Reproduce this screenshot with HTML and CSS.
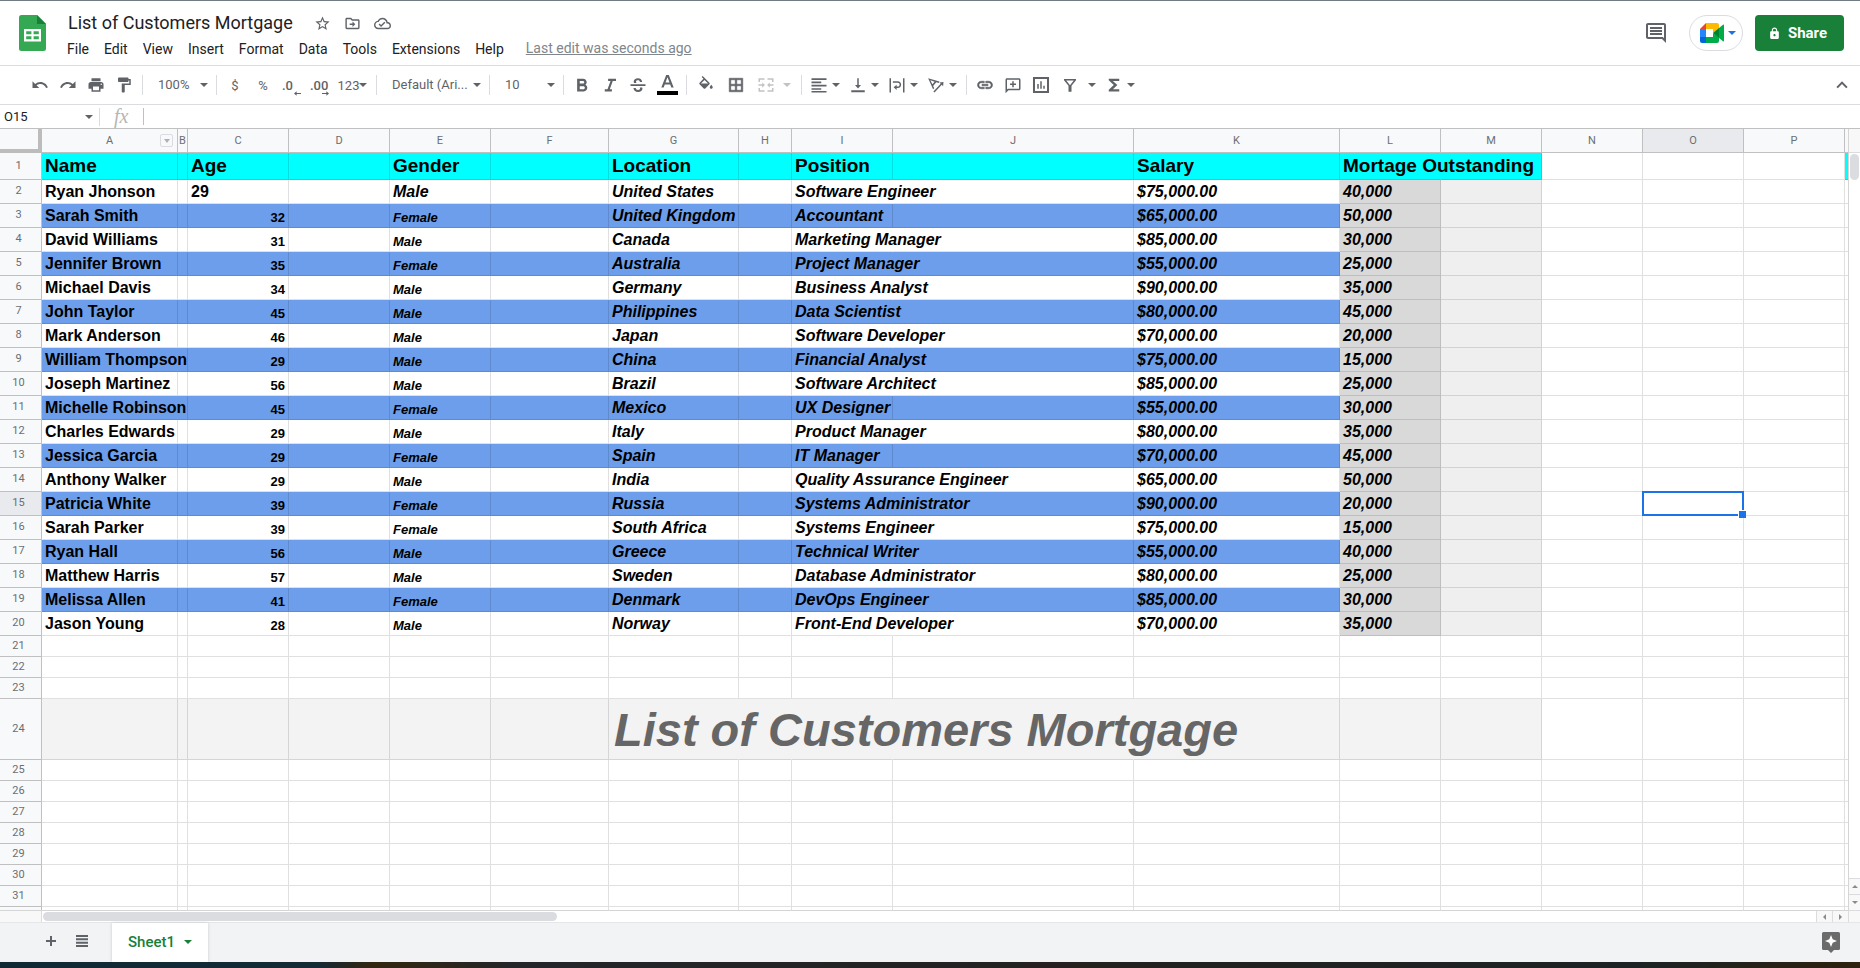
FILE: index.html
```html
<!DOCTYPE html>
<html lang="en">
<head>
<meta charset="utf-8">
<title>List of Customers Mortgage</title>
<link rel="stylesheet" href="styles.css">
</head>
<body>
<div class="app">
  <header class="header">
    <svg class="logo" viewBox="0 0 27 36" aria-hidden="true">
      <path d="M2.5 0H18l9 9v24.500a2.500 2.500 0 0 1-2.500 2.500h-22A2.500 2.500 0 0 1 0 33.500v-31A2.500 2.500 0 0 1 2.500 0z" fill="#34a853"/>
      <path d="M18 0l9 9h-9z" fill="#188038"/>
      <path d="M5 14h17v12.500H5zM7.200 16.200v3h5.200v-3zM14.600 16.200v3h5.200v-3zM7.200 21.300v3h5.200v-3zM14.600 21.300v3h5.200v-3z" fill="#fff" fill-rule="evenodd"/>
    </svg>
    <div class="doc">
      <div class="doc-row">
        <h1 class="doc-title">List of Customers Mortgage</h1>
        <button class="doc-btn" aria-label="Star"><svg viewBox="0 0 24 24"><path d="M22 9.240l-7.190-.620L12 2 9.190 8.630 2 9.240l5.460 4.730L5.820 21 12 17.270 18.180 21l-1.630-7.030L22 9.240zM12 15.400l-3.760 2.270 1-4.280-3.320-2.880 4.380-.380L12 6.100l1.710 4.040 4.380.380-3.320 2.880 1 4.280L12 15.400z"/></svg></button>
        <button class="doc-btn" aria-label="Move"><svg viewBox="0 0 24 24"><path d="M20 6h-8l-2-2H4c-1.100 0-2 .900-2 2v12c0 1.100.900 2 2 2h16c1.100 0 2-.900 2-2V8c0-1.100-.900-2-2-2zm0 12H4V6h5.200l2 2H20v10zm-8-1l4-4-4-4v3H8v2h4v3z"/></svg></button>
        <button class="doc-btn" aria-label="Saved to Drive"><svg viewBox="0 0 24 24"><path d="M19.350 10.040C18.670 6.590 15.640 4 12 4 9.110 4 6.600 5.640 5.350 8.040 2.340 8.360 0 10.910 0 14c0 3.310 2.690 6 6 6h13c2.760 0 5-2.240 5-5 0-2.640-2.050-4.780-4.650-4.960zM19 18H6c-2.210 0-4-1.790-4-4 0-2.050 1.530-3.760 3.560-3.970l1.070-.110.500-.950C8.080 7.140 9.940 6 12 6c2.620 0 4.880 1.860 5.390 4.430l.300 1.500 1.530.110c1.560.100 2.780 1.410 2.780 2.960 0 1.650-1.350 3-3 3zm-9-3.820l-2.090-2.090L6.500 13.500 10 17l6.010-6.010-1.410-1.410z"/></svg></button>
      </div>
      <nav class="menus">
        <button class="menu">File</button><button class="menu">Edit</button><button class="menu">View</button><button class="menu">Insert</button><button class="menu">Format</button><button class="menu">Data</button><button class="menu">Tools</button><button class="menu">Extensions</button><button class="menu">Help</button>
        <a class="last-edit" href="#history">Last edit was seconds ago</a>
      </nav>
    </div>
    <button class="comments" aria-label="Open comment history"><svg viewBox="0 0 24 24"><path d="M21.990 4c0-1.100-.890-2-1.990-2H4c-1.100 0-2 .900-2 2v12c0 1.100.900 2 2 2h14l4 4-.010-18zM20 4v13.170L18.830 16H4V4h16zM6 12h12v2H6zm0-3h12v2H6zm0-3h12v2H6z"/></svg></button>
    <button class="meet" aria-label="Join a call">
      <svg class="meet-logo" viewBox="0 0 24 20" aria-hidden="true">
        <path d="M6 0v6H0z" fill="#ea4335"/><path d="M0 6h6v8H0z" fill="#2684fc"/><path d="M0 14h6v6H2a2 2 0 0 1-2-2z" fill="#0066da"/>
        <path d="M6 0h11a2 2 0 0 1 2 2v4.500L13 10V6H6z" fill="#ffba00"/><path d="M6 14h7v-4l6 4.500V18a2 2 0 0 1-2 2H6z" fill="#00ac47"/>
        <path d="M13 10l6-5v10z" fill="#00832d"/><path d="M19 5l4-3.300c.500-.400 1 0 1 .500v15.600c0 .500-.500.900-1 .500L19 15z" fill="#00ac47"/>
      </svg>
      <span class="caret caret-blue"></span>
    </button>
    <button class="share"><svg viewBox="0 0 24 24"><path d="M18 8h-1V6c0-2.760-2.240-5-5-5S7 3.240 7 6v2H6c-1.100 0-2 .900-2 2v10c0 1.100.900 2 2 2h12c1.100 0 2-.900 2-2V10c0-1.100-.900-2-2-2zm-6 9c-1.100 0-2-.900-2-2s.900-2 2-2 2 .900 2 2-.900 2-2 2zM9 8V6c0-1.660 1.340-3 3-3s3 1.340 3 3v2z"/></svg>Share</button>
  </header>

  <div class="toolbar" role="toolbar" aria-label="Main">
    <button class="tool" aria-label="Undo"><svg viewBox="0 0 24 24"><path d="M12.500 8c-2.650 0-5.050.990-6.900 2.600L2 7v9h9l-3.620-3.620c1.390-1.160 3.160-1.880 5.120-1.880 3.540 0 6.550 2.310 7.600 5.500l2.370-.780C21.080 11.030 17.150 8 12.500 8z"/></svg></button>
    <button class="tool" aria-label="Redo"><svg viewBox="0 0 24 24"><path d="M18.400 10.600C16.550 8.990 14.150 8 11.500 8c-4.650 0-8.580 3.030-9.960 7.220L3.900 16c1.050-3.190 4.050-5.500 7.600-5.500 1.950 0 3.730.720 5.120 1.880L13 16h9V7l-3.600 3.600z"/></svg></button>
    <button class="tool" aria-label="Print"><svg viewBox="0 0 24 24"><path d="M19 8H5c-1.660 0-3 1.340-3 3v6h4v4h12v-4h4v-6c0-1.660-1.340-3-3-3zm-3 11H8v-5h8v5zm3-7c-.550 0-1-.450-1-1s.450-1 1-1 1 .450 1 1-.450 1-1 1zm-1-9H6v4h12V3z"/></svg></button>
    <button class="tool" aria-label="Paint format"><svg viewBox="0 0 24 24"><path d="M18 4V3c0-.550-.450-1-1-1H5c-.550 0-1 .450-1 1v4c0 .550.450 1 1 1h12c.550 0 1-.450 1-1V6h1v4H9v11c0 .550.450 1 1 1h2c.550 0 1-.450 1-1v-9h8V4h-3z"/></svg></button>
    <span class="sep"></span>
    <span class="picker"><select aria-label="Zoom"><option>100%</option></select></span>
    <span class="sep"></span>
    <button class="tool" aria-label="Currency">$</button>
    <button class="tool" aria-label="Percent">%</button>
    <button class="tool decimals" aria-label="Decrease decimal places">.0<svg viewBox="0 0 8 5"><path d="M3 0v2h5v1H3v2L0 2.500z"/></svg></button>
    <button class="tool decimals" aria-label="Increase decimal places">.00<svg viewBox="0 0 8 5"><path d="M5 0v2H0v1h5v2l3-2.500z"/></svg></button>
    <button class="tool formats" aria-label="More formats">123<span class="caret"></span></button>
    <span class="sep"></span>
    <span class="picker picker-font"><select aria-label="Font"><option>Default (Ari...</option></select></span>
    <span class="sep"></span>
    <span class="picker"><select aria-label="Font size"><option>10</option></select></span>
    <span class="sep"></span>
    <button class="tool" aria-label="Bold"><svg viewBox="0 0 24 24"><path d="M16.500 11.600c1-.800 1.800-2 1.800-3.200C18.300 5.600 16.200 3.500 13.500 3.500H5.500v17h8.900c2.700 0 4.700-2.100 4.700-4.700 0-1.900-1.100-3.500-2.600-4.200zM9 6.500h4.200c1 0 1.800.800 1.800 1.800s-.800 1.800-1.800 1.800H9zm4.800 11H9v-4h4.800c1.100 0 2 .900 2 2s-.900 2-2 2z"/></svg></button>
    <button class="tool" aria-label="Italic"><svg viewBox="0 0 24 24"><path d="M9.500 3.500v3h3.200L8.700 17.500H5v3h9.500v-3h-2.800l4-11H20v-3z"/></svg></button>
    <button class="tool" aria-label="Strikethrough"><svg viewBox="0 0 24 24"><path d="M2 11h20v2.200H2zM17.500 8h-3c0-1.500-1-2.400-2.600-2.400-1.500 0-2.500.700-2.500 1.900 0 .700.300 1.200.900 1.700H6.700c-.300-.500-.400-1.100-.400-1.800 0-2.600 2.300-4.400 5.600-4.400 3.400 0 5.600 2 5.600 5zM6 16h3c.100 1.700 1.200 2.600 3.100 2.600 1.700 0 2.700-.700 2.700-1.900 0-.600-.200-1-.600-1.400h3.400c.200.500.300 1 .300 1.600 0 2.700-2.200 4.300-5.700 4.300-3.900 0-6.200-2-6.200-5.200z"/></svg></button>
    <button class="tool tool-wide" aria-label="Text color"><svg class="text-color" viewBox="0 0 21 20"><path d="M9.200 0h2.600l4.900 12.500h-2.400l-1.100-3H7.800l-1.100 3H4.300zM8.500 7.500h4L10.500 2.200z"/><path d="M0 16h21v4H0z" fill="#000"/></svg></button>
    <span class="sep"></span>
    <button class="tool tool-wide" aria-label="Fill color"><svg viewBox="0 0 24 24"><path d="M16.560 8.940L7.620 0 6.210 1.410l2.380 2.380-5.150 5.150c-.590.590-.590 1.540 0 2.120l5.500 5.500c.290.290.680.440 1.060.440s.770-.150 1.060-.440l5.500-5.500c.590-.580.590-1.530 0-2.120zM5.210 10L10 5.210 14.790 10zM19 11.500s-2 2.170-2 3.500c0 1.100.900 2 2 2s2-.900 2-2c0-1.330-2-3.500-2-3.500z"/></svg></button>
    <button class="tool tool-wide" aria-label="Borders"><svg viewBox="0 0 24 24"><path d="M3 3v18h18V3zm8 16H5v-6h6zm0-8H5V5h6zm8 8h-6v-6h6zm0-8h-6V5h6z" stroke="currentColor" stroke-width=".8"/></svg></button>
    <button class="tool merge" aria-label="Merge cells" disabled><svg viewBox="0 0 24 24"><path d="M2 3h8v2H4v3H2zM14 3h8v5h-2V5h-6zM2 16h2v3h6v2H2zM20 16h2v5h-8v-2h6zM2 11h5V8.500l3.500 3.500L7 15.500V13H2zM22 11h-5V8.500L13.500 12l3.500 3.500V13h5z"/></svg><span class="caret"></span></button>
    <span class="sep"></span>
    <button class="tool pair" aria-label="Horizontal align"><svg viewBox="0 0 24 24"><path d="M2 3h20v2.200H2zM2 7.400h13v2.200H2zM2 11.800h20V14H2zM2 16.200h13v2.200H2zM2 20h20v2H2z"/></svg><span class="caret"></span></button>
    <button class="tool pair" aria-label="Vertical align"><svg viewBox="0 0 24 24"><path d="M16 12h-3V3h-2v9H8l4 4.500zM3 19v2.500h18V19z"/></svg><span class="caret"></span></button>
    <button class="tool pair" aria-label="Text wrapping"><svg viewBox="0 0 24 24"><path d="M2 3h2v19H2zM20 3h2v19h-2zM6.500 7H13c2.600 0 4.500 1.900 4.500 4.500S15.600 16 13 16h-1.500v2.500L7.500 15l4-3.500V14H13c1.500 0 2.500-1 2.500-2.500S14.500 9 13 9H6.500z"/></svg><span class="caret"></span></button>
    <button class="tool pair" aria-label="Text rotation"><svg viewBox="0 0 24 24"><path d="M1.500 3l15 4.200-.600 2-3.500-1-4.200 5 1.500 3.200-1.600 1.300zM4.500 5.800l2.700 5.300 3-3.600zM22 8l-.5 5.500-1.800-1.700L10 22l-1.500-1.500 9.800-10.100L16.500 8.600z"/></svg><span class="caret"></span></button>
    <span class="sep"></span>
    <button class="tool" aria-label="Insert link"><svg viewBox="0 0 24 24"><path d="M3.900 12c0-1.710 1.390-3.100 3.100-3.100h4V7H7c-2.760 0-5 2.240-5 5s2.240 5 5 5h4v-1.900H7c-1.710 0-3.100-1.390-3.100-3.100zM8 13h8v-2H8v2zm9-6h-4v1.900h4c1.710 0 3.100 1.390 3.100 3.100s-1.390 3.100-3.100 3.100h-4V17h4c2.760 0 5-2.240 5-5s-2.240-5-5-5z" stroke="currentColor" stroke-width=".8"/></svg></button>
    <button class="tool" aria-label="Insert comment"><svg viewBox="0 0 24 24"><path d="M4 3h16c1.100 0 2 .900 2 2v12c0 1.100-.900 2-2 2H6l-4 4V5c0-1.100.900-2 2-2zm0 2v13l1-1h15V5zm7 2h2v3h3v2h-3v3h-2v-3H8v-2h3z"/></svg></button>
    <button class="tool" aria-label="Insert chart"><svg viewBox="0 0 24 24"><path d="M7 10.500h2V17H7zM11 7h2v10h-2zM15 13h2v4h-2zM1.300 1.300v21.400h21.400V1.300zM4 4h16v16H4z" fill-rule="evenodd"/></svg></button>
    <button class="tool filter" aria-label="Create a filter"><svg viewBox="0 0 24 24"><path d="M4 4h16v1.500l-6 7.500v8h-4v-8L4 5.500zM7 6l5 6.200L17 6z" fill-rule="evenodd"/></svg><span class="caret"></span></button>
    <button class="tool pair" aria-label="Functions"><svg viewBox="0 0 24 24"><path d="M19 3.500H5v2.300l6.700 6.200L5 18.200v2.300h14v-3h-8.500l6-5.500-6-5.500H19z"/></svg><span class="caret"></span></button>
    <button class="tool collapse" aria-label="Hide the menus"><svg viewBox="0 0 24 24"><path d="M12 7l-7.500 7.500 1.900 1.900L12 10.800l5.600 5.600 1.900-1.900z"/></svg></button>
  </div>

  <div class="formula-bar">
    <label class="name-box"><input class="name-input" aria-label="Name box" value="O15"><span class="caret"></span></label>
    <label class="fx" for="formula">fx</label>
    <input class="formula-input" id="formula" aria-label="Formula">
  </div>

  <main class="sheet">
    <div class="viewport">
      <table class="grid">
        <colgroup id="cols"></colgroup>
        <thead id="head"></thead>
        <tbody id="body"></tbody>
      </table>
    </div>
    <div class="vscroll">
      <div class="vscroll-head"></div>
      <div class="vscroll-track"><div class="vthumb"></div></div>
      <button class="step step-v" aria-label="Scroll up"><span class="arrow arrow-up"></span></button>
      <button class="step step-v" aria-label="Scroll down"><span class="arrow arrow-down"></span></button>
    </div>
    <div class="hscroll">
      <div class="hscroll-head"></div>
      <div class="hscroll-track"><div class="hthumb"></div></div>
      <button class="step step-h" aria-label="Scroll left"><span class="arrow arrow-left"></span></button>
      <button class="step step-h" aria-label="Scroll right"><span class="arrow arrow-right"></span></button>
    </div>
    <div class="scroll-corner"></div>
  </main>

  <footer class="tabs">
    <button class="tab-tool" aria-label="Add sheet"><svg viewBox="0 0 12 12"><path d="M5 1h2v4h4v2H7v4H5V7H1V5h4z"/></svg></button>
    <button class="tab-tool" aria-label="All sheets"><svg viewBox="0 0 12 12"><path d="M0 0h12v2H0zM0 3.300h12v2H0zM0 6.700h12v2H0zM0 10h12v2H0z"/></svg></button>
    <button class="tab">Sheet1<span class="caret caret-green"></span></button>
    <button class="explore" aria-label="Explore"><svg viewBox="0 0 18 21"><path d="M1.500 0h15A1.500 1.500 0 0 1 18 1.500v15a1.500 1.500 0 0 1-1.500 1.500H12l-3 3-3-3H1.500A1.500 1.500 0 0 1 0 16.500v-15A1.500 1.500 0 0 1 1.500 0z" fill="#6b6b6b"/><path d="M9 3l1.700 4.300L15 9l-4.300 1.700L9 15l-1.700-4.300L3 9l4.300-1.700z" fill="#fff"/></svg></button>
  </footer>
  <div class="desktop-edge"></div>
</div>
<script src="grid.js"></script>
</body>
</html>
```
FILE: styles.css
```css
* { box-sizing: border-box; }
body { margin: 0; font-family: Roboto, "Liberation Sans", sans-serif; color: #202124; background: #fff; }
button, input, select { font: inherit; color: inherit; border: 0; padding: 0; margin: 0; background: none; outline: 0; }
svg { display: block; fill: currentColor; }
.app { display: flex; flex-direction: column; height: 100vh; overflow: hidden; border-top: 1px solid #6f7b85; }

.caret { flex: none; width: 0; height: 0; border: 4px solid transparent; border-top-color: #5f6368; border-bottom: 0; }
.caret-blue { border-top-color: #1a73e8; }
.caret-green { border-top-color: #188038; }

/* Document header */
.header { display: flex; align-items: center; flex: none; height: 65px; padding: 0 16px 0 19px; border-bottom: 1px solid #dadce0; }
.logo { flex: none; width: 27px; height: 36px; }
.doc { flex: 1; padding: 6px 0 0 21px; }
.doc-row { display: flex; align-items: center; height: 26px; padding-left: 1px; }
.doc-title { margin: 0 15px 0 0; font-size: 18px; font-weight: 400; line-height: 26px; }
.doc-btn { display: grid; place-items: center; width: 30px; height: 24px; color: #5f6368; }
.doc-btn svg { width: 17px; height: 17px; }
.menus { display: flex; align-items: center; height: 26px; font-size: 14px; line-height: 26px; gap: 15px; }
.last-edit { margin-left: 7px; padding-bottom: 2px; color: #80868b; text-decoration: underline; }
.comments { color: #5f6368; margin-right: 21px; }
.comments svg { width: 24px; height: 24px; }
.meet { display: flex; align-items: center; justify-content: center; gap: 4px; width: 54px; height: 36px; padding-left: 4px; border: 1px solid #dadce0; border-radius: 18px; margin-right: 12px; }
.meet-logo { width: 24px; height: 20px; }
.share { display: flex; align-items: center; justify-content: center; gap: 7px; width: 89px; height: 36px; padding-right: 4px; border-radius: 4px; background: #188038; color: #fff; font-size: 15px; font-weight: 700; }
.share svg { width: 13px; height: 13px; }

/* Toolbar */
.toolbar { display: flex; align-items: center; flex: none; height: 39px; padding: 0 4px 0 26px; border-bottom: 1px solid #dadce0; color: #5f6368; font-size: 13px; }
.tool { display: flex; flex: none; align-items: center; justify-content: center; width: 28px; height: 30px; }
.tool svg { flex: none; width: 18px; height: 18px; }
.tool-wide { width: 30px; }
.tool svg.text-color { width: 21px; height: 20px; }
.sep { flex: none; width: 1px; height: 20px; margin: 0 4px; background: #dadce0; }
.picker { position: relative; flex: none; width: 65px; height: 26px; }
.picker select { appearance: none; width: 100%; height: 24px; padding-left: 11px; }
.picker::after { content: ""; position: absolute; right: 4px; top: 11px; border: 4px solid transparent; border-top-color: #5f6368; border-bottom: 0; pointer-events: none; }
.picker-font { width: 104px; }
.tool.decimals { position: relative; justify-content: flex-start; padding-left: 5px; font-size: 13px; font-weight: 500; }
.tool.decimals svg { position: absolute; right: 4px; bottom: 4px; width: 7px; height: 5px; }
.tool.formats { width: 39px; font-size: 13px; }
.tool.merge { width: 46px; padding-left: 6px; gap: 8px; justify-content: flex-start; color: #c0c2c4; }
.merge .caret { border-top-color: #c0c2c4; }
.tool.pair { width: 39px; padding-left: 4px; gap: 4px; justify-content: flex-start; }
.tool.filter { width: 46px; padding-left: 6px; gap: 9px; justify-content: flex-start; }
.tool.collapse { margin-left: auto; }

/* Formula bar */
.formula-bar { display: flex; align-items: center; flex: none; height: 23px; font-size: 13px; }
.name-box { display: flex; align-items: center; width: 100px; height: 18px; padding: 0 6px 0 4px; border-right: 1px solid #dadce0; }
.name-input { flex: 1; min-width: 0; }
.fx { width: 44px; padding-left: 14px; border-right: 1px solid #c0c0c0; color: #b4b6b8; font: italic 20px/17px "Liberation Serif", serif; }
.formula-input { flex: 1; padding-left: 6px; }

/* Sheet area */
.sheet { display: grid; flex: 1; min-height: 0; grid-template-columns: minmax(0, 1fr) 12px; grid-template-rows: minmax(0, 1fr) 12px; border-top: 1px solid #c0c0c0; }
.viewport { overflow: hidden; }
.grid { table-layout: fixed; border-collapse: separate; border-spacing: 0; font-family: "Liberation Sans", Arial, sans-serif; }
.grid th { padding: 0; background: #f8f9fa; border: solid #c0c0c0; border-width: 0 1px 1px 0; color: #6b6e72; font: 400 11px/13px Roboto, sans-serif; }
.col-head th { height: 24px; }
.grid .corner { border: solid #bcbcbc; border-width: 0 4px 4px 0; }
.head-box { display: flex; align-items: center; justify-content: center; position: relative; }
.head-menu { position: absolute; right: 4px; top: 0; width: 13px; height: 13px; display: grid; place-items: center; border: 1px solid #dadce0; border-radius: 2px; }
.head-menu .caret { border-width: 4px 3px 0; border-top-color: #b0b0b0; }
.grid th.active { background: #e8eaed; }
.grid tbody th { padding: 0 4px 2px 0; }
.grid td { height: 21px; padding: 0 3px 1px; border: solid rgba(0, 0, 0, .12); border-width: 0 1px 1px 0; vertical-align: bottom; white-space: nowrap; color: #000; font-size: 16px; font-weight: 700; line-height: 18px; }
.grid td.covered { border-right-color: transparent; }
.grid .titles td { height: 27px; font-size: 19px; line-height: 25px; }
.grid .person td { height: 24px; line-height: 20px; }
.grid .person td.small { font-size: 13px; line-height: 17px; }
.grid .banner td { height: 61px; padding-left: 5px; font-size: 47px; line-height: 56px; font-style: italic; color: #666; }
.grid td.slanted { font-style: italic; }
.grid td.number { text-align: right; }
.cyan { background: #0ff; }
.blue { background: #6d9eeb; }
.gray-1 { background: #d9d9d9; }
.gray-2 { background: #efefef; }
.gray-3 { background: #f3f3f3; }
.grid td.current { position: relative; }
.selection { position: absolute; inset: -1px; border: 2px solid #1a73e8; }
.selection::after { content: ""; position: absolute; right: -4px; bottom: -4px; width: 7px; height: 7px; border: solid #fff; border-width: 1px 0 0 1px; background: #1a73e8; }

/* Scroll bars */
.vscroll { display: flex; flex-direction: column; border-left: 1px solid #d5d5d5; }
.vscroll-head { height: 24px; background: #f8f8f8; border-bottom: 1px solid #dadce0; }
.vscroll-track { flex: 1; padding: 1px; }
.vthumb { width: 9px; height: 26px; border-radius: 5px; background: #dadce0; }
.hscroll { display: flex; border-top: 1px solid #d5d5d5; }
.hscroll-head { width: 42px; background: #f8f8f8; border-right: 1px solid #dadce0; }
.hscroll-track { flex: 1; padding: 1px; }
.hthumb { width: 29%; height: 9px; border-radius: 5px; background: #dadce0; }
.step { display: grid; place-items: center; background: #f8f8f8; border: 0 solid #dadce0; }
.step-v { height: 16px; border-top-width: 1px; }
.step-h { width: 16px; border-left-width: 1px; }
.arrow { border: 3px solid transparent; }
.arrow-up { border-bottom-color: #8a8a8a; border-top: 0; }
.arrow-down { border-top-color: #8a8a8a; border-bottom: 0; }
.arrow-left { border-right-color: #8a8a8a; border-left: 0; }
.arrow-right { border-left-color: #8a8a8a; border-right: 0; }
.scroll-corner { background: #f8f8f8; border: solid #dadce0; border-width: 1px 0 0 1px; }

/* Sheet tabs */
.tabs { display: flex; align-items: stretch; flex: none; height: 40px; padding: 0 20px 0 35px; background: #f1f3f4; border-top: 1px solid #e4e6e8; }
.tab-tool { width: 31px; display: grid; place-items: center; color: #5f6368; padding-bottom: 4px; }
.tab-tool svg { width: 12px; height: 12px; }
.tab { display: flex; align-items: center; justify-content: center; gap: 9px; width: 96px; margin-left: 15px; padding-bottom: 2px; background: #fff; color: #188038; font-size: 15px; font-weight: 500; box-shadow: 0 0 3px #c8cacc; }
.explore { margin-left: auto; }
.explore svg { width: 18px; height: 21px; }
.desktop-edge { flex: none; height: 6px; background: linear-gradient(90deg, #102a35 0, #142a35 17%, #33260f 20%, #24262b 28%, #24211f 60%, #1c2224 88%, #2e210f 100%); }
```
FILE: grid.js
```js
const columns = [
  ['A', 136], ['B', 10], ['C', 101], ['D', 101], ['E', 101], ['F', 118], ['G', 130], ['H', 53], ['I', 101],
  ['J', 241], ['K', 206], ['L', 101], ['M', 101], ['N', 101], ['O', 101], ['P', 101], ['Q', 101]
];
const people = [
  ['Ryan Jhonson', '29', 'Male', 'United States', 'Software Engineer', '$75,000.00', '40,000'],
  ['Sarah Smith', '32', 'Female', 'United Kingdom', 'Accountant', '$65,000.00', '50,000'],
  ['David Williams', '31', 'Male', 'Canada', 'Marketing Manager', '$85,000.00', '30,000'],
  ['Jennifer Brown', '35', 'Female', 'Australia', 'Project Manager', '$55,000.00', '25,000'],
  ['Michael Davis', '34', 'Male', 'Germany', 'Business Analyst', '$90,000.00', '35,000'],
  ['John Taylor', '45', 'Male', 'Philippines', 'Data Scientist', '$80,000.00', '45,000'],
  ['Mark Anderson', '46', 'Male', 'Japan', 'Software Developer', '$70,000.00', '20,000'],
  ['William Thompson', '29', 'Male', 'China', 'Financial Analyst', '$75,000.00', '15,000'],
  ['Joseph Martinez', '56', 'Male', 'Brazil', 'Software Architect', '$85,000.00', '25,000'],
  ['Michelle Robinson', '45', 'Female', 'Mexico', 'UX Designer', '$55,000.00', '30,000'],
  ['Charles Edwards', '29', 'Male', 'Italy', 'Product Manager', '$80,000.00', '35,000'],
  ['Jessica Garcia', '29', 'Female', 'Spain', 'IT Manager', '$70,000.00', '45,000'],
  ['Anthony Walker', '29', 'Male', 'India', 'Quality Assurance Engineer', '$65,000.00', '50,000'],
  ['Patricia White', '39', 'Female', 'Russia', 'Systems Administrator', '$90,000.00', '20,000'],
  ['Sarah Parker', '39', 'Female', 'South Africa', 'Systems Engineer', '$75,000.00', '15,000'],
  ['Ryan Hall', '56', 'Male', 'Greece', 'Technical Writer', '$55,000.00', '40,000'],
  ['Matthew Harris', '57', 'Male', 'Sweden', 'Database Administrator', '$80,000.00', '25,000'],
  ['Melissa Allen', '41', 'Female', 'Denmark', 'DevOps Engineer', '$85,000.00', '30,000'],
  ['Jason Young', '28', 'Male', 'Norway', 'Front-End Developer', '$70,000.00', '35,000']
];
const fields = ['A', 'C', 'E', 'G', 'I', 'K', 'L'];
const titles = ['Name', 'Age', 'Gender', 'Location', 'Position', 'Salary', 'Mortage Outstanding'];
const lastRow = 32;
const lastColumn = 'Q';

const el = (tag, className, text) => {
  const node = document.createElement(tag);
  if (className) node.className = className;
  if (text) node.textContent = text;
  return node;
};

// Column widths, with the row-number column first
const cols = document.getElementById('cols');
[42, ...columns.map(c => c[1])].forEach(width => {
  const col = el('col');
  col.style.width = width + 'px';
  cols.append(col);
});
document.querySelector('.grid').style.width = columns.reduce((sum, c) => sum + c[1], 42) + 'px';

// The partly scrolled-in last column and last row carry no label
const headRow = el('tr', 'col-head');
headRow.append(el('th', 'corner'));
columns.forEach(([name]) => {
  const th = el('th', name === 'O' ? 'active' : '');
  th.scope = 'col';
  const box = el('div', 'head-box', name === lastColumn ? '' : name);
  if (name === 'A') {
    const menu = el('button', 'head-menu');
    menu.setAttribute('aria-label', 'Column A menu');
    menu.append(el('span', 'caret'));
    box.append(menu);
  }
  th.append(box);
  headRow.append(th);
});
document.getElementById('head').append(headRow);

function cellText(row, name) {
  const i = fields.indexOf(name);
  if (row === 1) return i < 0 ? '' : titles[i];
  if (row === 24) return name === 'G' ? 'List of Customers Mortgage' : '';
  return i >= 0 && people[row - 2] ? people[row - 2][i] : '';
}

function cellClass(row, name) {
  const classes = [];
  const used = name <= 'M';
  if (row === 1 && (used || name === 'Q')) classes.push('cyan');
  if (row === 24 && used) classes.push('gray-3');
  if (row === 15 && name === 'O') classes.push('current');
  if (row >= 2 && row <= 20) {
    if (name === 'L') classes.push('gray-1');
    else if (name === 'M') classes.push('gray-2');
    else if (used && row % 2) classes.push('blue');
    if (name >= 'E') classes.push('slanted');
    if (row > 2 && (name === 'C' || name === 'E')) classes.push('small');
    if (row > 2 && name === 'C') classes.push('number');
  }
  return classes.join(' ');
}

const body = document.getElementById('body');
for (let row = 1; row <= lastRow; row++) {
  const kind = row === 1 ? 'titles' : row <= 20 ? 'person' : row === 24 ? 'banner' : '';
  const tr = el('tr', kind);
  const th = el('th', row === 15 ? 'active' : '', row === lastRow ? '' : String(row));
  th.scope = 'row';
  tr.append(th);
  columns.forEach(([name]) => {
    const td = el('td', cellClass(row, name));
    const text = cellText(row, name);
    if (text) td.append(el('span', '', text));
    if (row === 15 && name === 'O') td.append(el('div', 'selection'));
    tr.append(td);
  });
  body.append(tr);
}

// Text that runs past its cell hides the grid lines it crosses
body.querySelectorAll('td > span').forEach(span => {
  let td = span.parentElement;
  let room = td.offsetWidth - 3;
  while (span.offsetWidth > room && td.nextElementSibling && !td.nextElementSibling.textContent) {
    td.classList.add('covered');
    td = td.nextElementSibling;
    room += td.offsetWidth;
  }
});
```
